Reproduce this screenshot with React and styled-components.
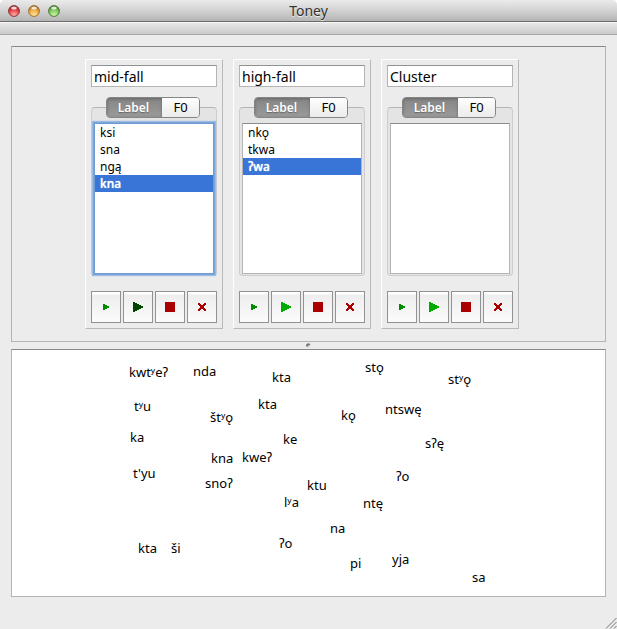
import React, { useState } from "react";
import styled, { createGlobalStyle, css } from "styled-components";

const GlobalStyle = createGlobalStyle`
  * { box-sizing: border-box; }
  body {
    margin: 0;
    background: #fff;
    color: #000;
    font: 13px/17px "Noto Sans", "Open Sans", sans-serif;
  }
  button, input { font: inherit; color: inherit; }
`;

const Window = styled.div`
  display: flex;
  flex-direction: column;
  min-height: 100vh;
  background: #ececec;
  border-radius: 5px 5px 0 0;
  overflow: hidden;
`;

const TitleBar = styled.header`
  display: grid;
  grid-template-columns: 1fr auto 1fr;
  align-items: center;
  height: 22px;
  padding: 0 8px;
  background: linear-gradient(#ebebeb, #d2d2d2 50%, #b4b4b4);
  border-bottom: 1px solid #6b6b6b;
`;

const Lights = styled.div`
  display: flex;
  gap: 8px;
`;

const LightButton = styled.button`
  display: block;
  width: 12px;
  height: 12px;
  padding: 0;
  border: 0;
  background: none;
  svg { display: block; }
`;

const Title = styled.h1`
  margin: 0;
  font-size: 14px;
  font-weight: 400;
  color: #333;
  text-shadow: 0 1px 0 #eee;
`;

const ToolStrip = styled.div`
  height: 13px;
  background: linear-gradient(#e6e6e6, #cbcbcb);
  border-top: 1px solid #f7f7f7;
  border-bottom: 1px solid #a5a5a5;
`;

const Main = styled.main`
  flex: 1;
  display: flex;
  flex-direction: column;
  padding: 11px 11px 0;
`;

const Clusters = styled.section`
  display: flex;
  justify-content: center;
  gap: 10px;
  padding: 12px 13px 12px 0;
  border: 1px solid #b4b4b4;
  border-top-color: #888;
`;

const Card = styled.article`
  width: 138px;
  padding: 5px;
  border: 1px solid;
  border-color: #fff #b9b9b9 #b9b9b9 #fff;
`;

const NameInput = styled.input`
  display: block;
  width: 100%;
  height: 22px;
  padding: 0 2px;
  font-size: 14px;
  border: 1px solid #b4b4b4;
  border-top-color: #929292;
  border-radius: 0;
  background: #fff;
  outline: none;
`;

const Group = styled.div`
  margin-top: 20px;
  padding: 0 2px 1px;
  background: #e4e4e4;
  border: 1px solid #cdcdcd;
  border-top-color: #b4b4b4;
  border-radius: 4px;
`;

const Tabs = styled.div`
  display: flex;
  width: 94px;
  height: 21px;
  margin: -11px auto 5px 12px;
  border: 1px solid #858585;
  border-radius: 4px;
  overflow: hidden;
`;

const Tab = styled.button`
  flex: ${(p) => (p.$active ? "0 0 55px" : "1")};
  padding: 0;
  border: 0;
  line-height: 19px;
  background: linear-gradient(#fff, #f4f4f4 50%, #ececec);
  ${(p) =>
    p.$active &&
    css`
      padding-right: 2px;
      font-size: 12px;
      font-weight: 600;
      color: #fff;
      background: linear-gradient(#858585, #9a9a9a);
      box-shadow: inset 0 1px 3px #666;
      text-shadow: 0 1px 1px #666;
    `}
`;

const WordList = styled.ul`
  height: 151px;
  margin: 0;
  padding: 0;
  list-style: none;
  background: #fff;
  border: 1px solid #b4b4b4;
  border-top-color: #8c8c8c;
  outline: none;
  ${(p) =>
    p.$focused &&
    css`
      border-color: #6e9bd1;
      box-shadow: 0 0 0 1px #7ba6da, 0 0 1px 2px #9bbbe2;
    `}
`;

const WordItem = styled.li`
  height: 17px;
  padding-left: 5px;
  font-size: 12px;
  ${(p) =>
    p.$selected &&
    css`
      color: #fff;
      font-weight: 500;
      background: #3875d7;
      text-shadow: 0 0 1px #fff;
    `}
`;

const Actions = styled.div`
  display: grid;
  grid-template-columns: repeat(4, 1fr);
  gap: 2px;
  margin-top: 15px;
`;

const ActionButton = styled.button`
  display: grid;
  place-items: center;
  height: 32px;
  padding: 0;
  border: 1px solid #929292;
  background: linear-gradient(#fff 0 2px, #eee 3px, #fbfbfb);
`;

const Divider = styled.div`
  display: grid;
  place-items: center;
  height: 7px;
  svg { display: block; }
`;

const Canvas = styled.section`
  position: relative;
  flex: 1;
  min-height: 248px;
  background: #fff;
  border: 1px solid #b4b4b4;
  border-top-color: #888;
`;

const CanvasWord = styled.span`
  position: absolute;
  white-space: nowrap;
`;

const Footer = styled.footer`
  display: flex;
  justify-content: flex-end;
  align-items: flex-end;
  height: 32px;
  svg { display: block; }
`;

const lights = [
  { name: "Close", edge: "#8d2527", fill: "#e9484c", glow: "#ffb3b0" },
  { name: "Minimize", edge: "#98651f", fill: "#f0ac45", glow: "#ffe9a0" },
  { name: "Zoom", edge: "#437329", fill: "#7fc95f", glow: "#d2f7ae" },
];

function Light({ name, edge, fill, glow }) {
  return (
    <LightButton aria-label={name}>
      <svg width="12" height="12" viewBox="0 0 12 12">
        <defs>
          <radialGradient id={name} cx="50%" cy="90%" r="85%">
            <stop offset="0" stopColor={glow} />
            <stop offset="0.6" stopColor={fill} />
            <stop offset="1" stopColor={edge} />
          </radialGradient>
        </defs>
        <circle cx="6" cy="6" r="5.4" fill={`url(#${name})`} stroke={edge} strokeWidth="0.9" />
        <ellipse cx="6" cy="3" rx="2.8" ry="1.6" fill="#fff" opacity="0.8" />
      </svg>
    </LightButton>
  );
}

function PlayOne() {
  return (
    <svg width="16" height="16" shapeRendering="crispEdges">
      <path d="M5 5h2v1h2v1h2v2H9v1H7v1H5z" fill="#008a00" />
    </svg>
  );
}

function PlayAll({ color }) {
  return (
    <svg width="16" height="16" shapeRendering="crispEdges">
      <path d="M3 3h2v1h2v1h2v1h2v1h2v2h-2v1H9v1H7v1H5v1H3z" fill={color} />
    </svg>
  );
}

function Stop() {
  return (
    <svg width="16" height="16">
      <path d="M3 3h10v10H3z" fill="#aa0000" />
    </svg>
  );
}

function Remove() {
  return (
    <svg width="16" height="16" shapeRendering="crispEdges">
      <path
        d="M4 4h2v1h1v1h2V5h1V4h2v2h-1v1h-1v2h1v1h1v2h-2v-1H9v-1H7v1H6v1H4v-2h1V9h1V7H5V6H4z"
        fill="#aa0000"
      />
    </svg>
  );
}

const clusters = [
  { name: "mid-fall", words: ["ksi", "sna", "ngą", "kna"], selected: 3, focused: true },
  { name: "high-fall", words: ["nkǫ", "tkwa", "ʔwa"], selected: 2 },
  { name: "Cluster", words: [], selected: -1 },
];

/* Each entry: text, left edge, top edge on the canvas. */
const looseWords = [
  ["kwtʸeʔ", 117, 14],
  ["nda", 181, 13],
  ["kta", 260, 19],
  ["stǫ", 353, 9],
  ["stʸǫ", 436, 21],
  ["tʸu", 122, 48],
  ["štʸǫ", 198, 59],
  ["kta", 246, 46],
  ["kǫ", 329, 57],
  ["ntswę", 373, 51],
  ["ka", 118, 79],
  ["ke", 271, 81],
  ["sʔę", 413, 85],
  ["kna", 199, 100],
  ["kweʔ", 230, 99],
  ["t'yu", 121, 115],
  ["snoʔ", 193, 125],
  ["ʔo", 384, 118],
  ["ktu", 295, 127],
  ["lʸa", 272, 144],
  ["ntę", 351, 145],
  ["na", 318, 170],
  ["kta", 126, 190],
  ["ši", 159, 190],
  ["ʔo", 267, 185],
  ["pi", 338, 205],
  ["yja", 380, 201],
  ["sa", 460, 219],
];

function ClusterCard({ cluster }) {
  const [name, setName] = useState(cluster.name);
  const [tab, setTab] = useState("Label");
  const [selected, setSelected] = useState(cluster.selected);
  return (
    <Card>
      <NameInput
        aria-label="Cluster name"
        value={name}
        onChange={(e) => setName(e.target.value)}
      />
      <Group>
        <Tabs role="tablist">
          {["Label", "F0"].map((t) => (
            <Tab
              key={t}
              role="tab"
              aria-selected={t === tab}
              $active={t === tab}
              onClick={() => setTab(t)}
            >
              {t}
            </Tab>
          ))}
        </Tabs>
        <WordList role="listbox" aria-label="Words" tabIndex={0} $focused={cluster.focused}>
          {cluster.words.map((w, i) => (
            <WordItem
              key={w}
              role="option"
              aria-selected={i === selected}
              $selected={i === selected}
              onClick={() => setSelected(i)}
            >
              {w}
            </WordItem>
          ))}
        </WordList>
      </Group>
      <Actions>
        <ActionButton aria-label="Play selected"><PlayOne /></ActionButton>
        <ActionButton aria-label="Play all">
          <PlayAll color={cluster.focused ? "#004400" : "#00aa00"} />
        </ActionButton>
        <ActionButton aria-label="Stop"><Stop /></ActionButton>
        <ActionButton aria-label="Remove"><Remove /></ActionButton>
      </Actions>
    </Card>
  );
}

export default function App() {
  return (
    <>
      <GlobalStyle />
      <Window>
        <TitleBar>
          <Lights>
            {lights.map((l) => (
              <Light key={l.name} {...l} />
            ))}
          </Lights>
          <Title>Toney</Title>
        </TitleBar>
        <ToolStrip />
        <Main>
          <Clusters>
            {clusters.map((c) => (
              <ClusterCard key={c.name} cluster={c} />
            ))}
          </Clusters>
          <Divider>
            <svg width="5" height="5" viewBox="0 0 5 5">
              <circle cx="2.5" cy="2.5" r="2.2" fill="#d8d8d8" />
              <path d="M0.2 3.4a2.2 2.2 0 0 1 4.2-1.6L2.6 2.2 1.8 3.6z" fill="#777" />
            </svg>
          </Divider>
          <Canvas>
            {looseWords.map(([text, left, top], i) => (
              <CanvasWord key={i} style={{ left, top }}>
                {text}
              </CanvasWord>
            ))}
          </Canvas>
        </Main>
        <Footer>
          <svg width="12" height="12" viewBox="0 0 12 12" stroke="#777" strokeWidth="1">
            <path d="M1 11.5L11.5 1M5 11.5L11.5 5M9 11.5L11.5 9" fill="none" />
          </svg>
        </Footer>
      </Window>
    </>
  );
}
